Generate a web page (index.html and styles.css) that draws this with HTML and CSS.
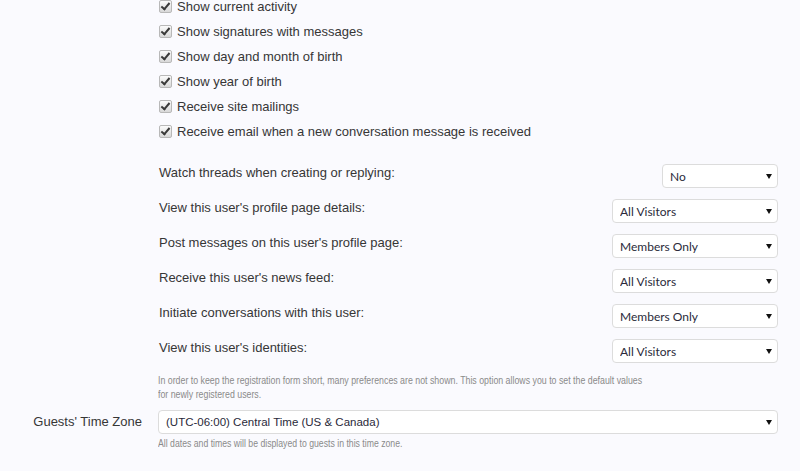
FILE: index.html
```html
<!DOCTYPE html>
<html>
<head>
<meta charset="utf-8">
<link rel="stylesheet" href="styles.css">
</head>
<body>
<div class="page">
  <div class="row">
    <div class="label"></div>
    <div class="content">
      <ul class="checks">
        <li><span class="cb"></span>Show current activity</li>
        <li><span class="cb"></span>Show signatures with messages</li>
        <li><span class="cb"></span>Show day and month of birth</li>
        <li><span class="cb"></span>Show year of birth</li>
        <li><span class="cb"></span>Receive site mailings</li>
        <li><span class="cb"></span>Receive email when a new conversation message is received</li>
      </ul>
      <div class="prefs">
        <div class="pref"><span class="plabel">Watch threads when creating or replying:</span><span class="sel short"><select><option>No</option></select></span></div>
        <div class="pref"><span class="plabel">View this user's profile page details:</span><span class="sel"><select><option>All Visitors</option></select></span></div>
        <div class="pref"><span class="plabel">Post messages on this user's profile page:</span><span class="sel"><select><option>Members Only</option></select></span></div>
        <div class="pref"><span class="plabel">Receive this user's news feed:</span><span class="sel"><select><option>All Visitors</option></select></span></div>
        <div class="pref"><span class="plabel">Initiate conversations with this user:</span><span class="sel"><select><option>Members Only</option></select></span></div>
        <div class="pref"><span class="plabel">View this user's identities:</span><span class="sel"><select><option>All Visitors</option></select></span></div>
      </div>
      <p class="hint first">In order to keep the registration form short, many preferences are not shown. This option allows you to set the default values<br>for newly registered users.</p>
    </div>
  </div>
  <div class="row tz">
    <div class="label">Guests' Time Zone</div>
    <div class="content">
      <span class="sel wide"><select class="tzsel"><option>(UTC-06:00) Central Time (US &amp; Canada)</option></select></span>
      <p class="hint">All dates and times will be displayed to guests in this time zone.</p>
    </div>
  </div>
</div>
</body>
</html>
```
FILE: styles.css
```css
html, body {
  margin: 0;
  padding: 0;
  background: #fafafe;
}
body {
  font-family: "Liberation Sans", Arial, sans-serif;
  font-size: 13px;
  color: #363636;
  width: 800px;
  height: 471px;
  overflow: hidden;
}
.page {
  padding-right: 22px;
  margin-top: -6px;
}
.row {
  display: grid;
  grid-template-columns: 142px 1fr;
  column-gap: 16px;
}
.label {
  text-align: right;
  padding-top: 4px;
  line-height: 16px;
}
.checks {
  list-style: none;
  margin: 0;
  padding: 0 0 0 1px;
}
.checks li {
  height: 25px;
  display: flex;
  align-items: center;
  gap: 5px;
}
.cb {
  width: 11px;
  height: 11px;
  border: 1px solid #b8b8b8;
  border-radius: 2px;
  background: linear-gradient(#fbfbfb, #d8d8d8);
  position: relative;
  flex: none;
}
.cb::after {
  content: "";
  position: absolute;
  left: 3px;
  top: 0px;
  width: 3px;
  height: 7px;
  border: solid #3a3a3a;
  border-width: 0 2px 2px 0;
  transform: rotate(40deg);
}
.prefs {
  margin-top: 20px;
  display: flex;
  flex-direction: column;
  gap: 11px;
}
.pref {
  display: flex;
  justify-content: space-between;
  align-items: flex-start;
  height: 24px;
  padding-left: 1px;
}
.plabel {
  line-height: 16px;
  padding-top: 1px;
}
.sel {
  position: relative;
  display: block;
  width: 166px;
  height: 24px;
}
.sel.short { width: 116px; }
.sel.wide { width: 100%; }
.sel::after {
  content: "";
  position: absolute;
  right: 6px;
  top: 10px;
  border-style: solid;
  border-width: 5px 3px 0 3px;
  border-color: #111 transparent transparent transparent;
  pointer-events: none;
}
select {
  -webkit-appearance: none;
  appearance: none;
  width: 100%;
  height: 24px;
  margin: 0;
  box-sizing: border-box;
  background: #fff;
  border: 1px solid #dcdcdc;
  border-radius: 4px;
  padding: 0 7px;
  font-family: Lato, "Liberation Sans", sans-serif;
  font-size: 12px;
  color: #2a2a3a;
  outline: none;
}
.tzsel {
  font-family: "Liberation Sans", Arial, sans-serif;
  font-size: 11.5px;
}
.hint {
  margin: 0;
  font-family: "Liberation Sans", Arial, sans-serif;
  font-size: 11px;
  line-height: 14px;
  color: #8a8a8a;
  white-space: nowrap;
  transform: scaleX(0.79);
  transform-origin: left top;
}
.hint.first {
  margin-top: 10px;
  transform: scaleX(0.8);
}
.tz {
  margin-top: 9px;
}
.tz .hint {
  margin-top: 2px;
}
```
